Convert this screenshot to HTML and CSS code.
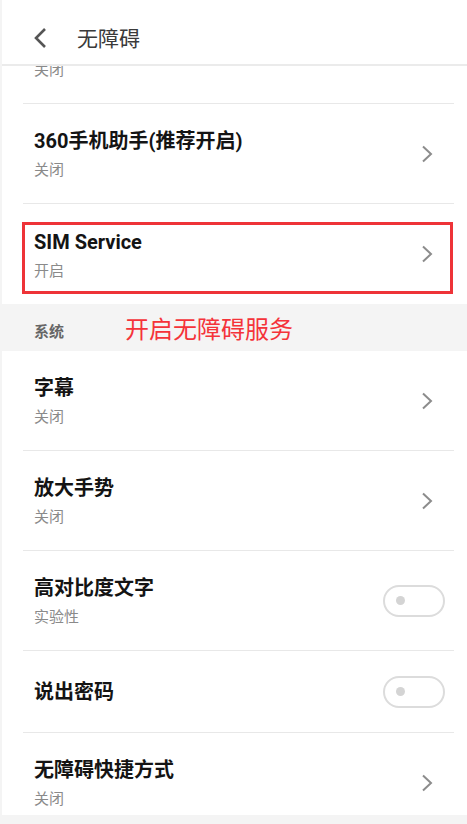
FILE: index.html
```html
<!DOCTYPE html>
<html lang="zh-CN">
<head>
<meta charset="UTF-8" />
<meta name="viewport" content="width=device-width, initial-scale=1" />
<title>无障碍</title>
<link rel="stylesheet" href="styles.css">
</head>
<body>

<div class="page">
  <div class="header">
    <svg class="back" width="14" height="22" viewBox="0 0 14 22">
      <path d="M12 2 L3 11 L12 20" fill="none" stroke="#555" stroke-width="2.6" />
    </svg>
    <span class="header-title">无障碍</span>
  </div>

  <!-- row scrolled under the header -->
  <div class="row cut">
    <div class="text">
      <div class="sub">关闭</div>
    </div>
  </div>

  <div class="row">
    <div class="text">
      <div class="title">360手机助手(推荐开启)</div>
      <div class="sub">关闭</div>
    </div>
    <svg class="chevron" width="12" height="18" viewBox="0 0 12 18">
      <path d="M2 1.5 L10 9 L2 16.5" fill="none" stroke="#8c8c8c" stroke-width="2" />
    </svg>
  </div>

  <div class="row marked last-in-group">
    <div class="text">
      <div class="title">SIM Service</div>
      <div class="sub">开启</div>
    </div>
    <svg class="chevron" width="12" height="18" viewBox="0 0 12 18">
      <path d="M2 1.5 L10 9 L2 16.5" fill="none" stroke="#8c8c8c" stroke-width="2" />
    </svg>
  </div>

  <div class="section">
    <span class="section-name">系统</span>
    <span class="note">开启无障碍服务</span>
  </div>

  <div class="row">
    <div class="text">
      <div class="title">字幕</div>
      <div class="sub">关闭</div>
    </div>
    <svg class="chevron" width="12" height="18" viewBox="0 0 12 18">
      <path d="M2 1.5 L10 9 L2 16.5" fill="none" stroke="#8c8c8c" stroke-width="2" />
    </svg>
  </div>

  <div class="row">
    <div class="text">
      <div class="title">放大手势</div>
      <div class="sub">关闭</div>
    </div>
    <svg class="chevron" width="12" height="18" viewBox="0 0 12 18">
      <path d="M2 1.5 L10 9 L2 16.5" fill="none" stroke="#8c8c8c" stroke-width="2" />
    </svg>
  </div>

  <div class="row">
    <div class="text">
      <div class="title">高对比度文字</div>
      <div class="sub">实验性</div>
    </div>
    <div class="toggle"><span class="knob"></span></div>
  </div>

  <div class="row single">
    <div class="text">
      <div class="title">说出密码</div>
    </div>
    <div class="toggle"><span class="knob"></span></div>
  </div>

  <!-- last row runs under the bottom edge -->
  <div class="clip">
    <div class="row">
      <div class="text">
        <div class="title">无障碍快捷方式</div>
        <div class="sub">关闭</div>
      </div>
      <svg class="chevron" width="12" height="18" viewBox="0 0 12 18">
        <path d="M2 1.5 L10 9 L2 16.5" fill="none" stroke="#8c8c8c" stroke-width="2" />
      </svg>
    </div>
  </div>
</div>

</body>
</html>
```

FILE: styles.css
```css
body {
  margin: 0;
  background: #f4f4f4;
  font-family: Roboto, "Noto Sans CJK SC", sans-serif;
}

.page {
  margin-left: 2px;
  background: #fff;
}

/* Top bar */
.header {
  height: 54px;
  padding-top: 10px;
  display: flex;
  align-items: center;
  border-bottom: 2px solid #ebebeb;
  background: #fff;
}

.back {
  margin-left: 31px;
  margin-top: 1px;
}

.header-title {
  margin-left: 30px;
  font-size: 21px;
  color: #3a3a3a;
}

/* List rows */
.row {
  position: relative;
  height: 100px;
  margin: 0 13px 0 21px;
  padding: 0 9px 0 11px;
  display: flex;
  align-items: center;
  justify-content: space-between;
  border-bottom: 1px solid #e8e8e8;
  box-sizing: border-box;
}

.row.cut {
  height: 38px;
  align-items: flex-end;
  overflow: hidden;
}

.row.cut .text {
  padding-bottom: 23px;
}

.row.last-in-group {
  border-bottom: none;
}

.row.single {
  height: 82px;
}

.clip {
  height: 82px;
  overflow: hidden;
}

.title {
  font-size: 20px;
  line-height: 28px;
  font-weight: 700;
  color: #141414;
}

.sub {
  margin-top: 5px;
  font-size: 15px;
  line-height: 20px;
  color: #8a8a8a;
}

.chevron {
  margin-right: 12px;
}

/* Red highlight box around SIM Service */
.row.marked::after {
  content: "";
  position: absolute;
  left: -1px;
  right: 1px;
  top: 18px;
  bottom: 10px;
  border: 3px solid #ee3338;
}

/* Section header */
.section {
  height: 47px;
  background: #f4f4f4;
  display: flex;
  align-items: center;
  padding-left: 32px;
}

.section-name {
  font-size: 15px;
  color: #666;
  font-weight: 700;
  margin-top: 5px;
}

.note {
  margin-left: 61px;
  font-size: 24px;
  color: #f4333a;
}

/* Switch */
.toggle {
  width: 62px;
  height: 32px;
  border: 2px solid #dcdcdc;
  border-radius: 17px;
  box-sizing: border-box;
  display: flex;
  align-items: center;
  padding-left: 11px;
}

.knob {
  width: 9px;
  height: 9px;
  border-radius: 50%;
  background: #d4d4d4;
}
```
